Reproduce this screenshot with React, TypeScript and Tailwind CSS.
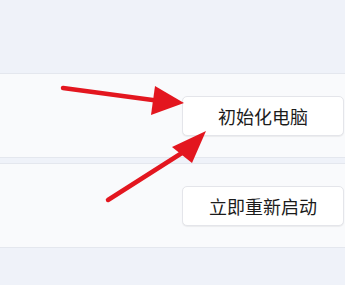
export default function App() {
  return (
    <div
      className="relative w-[345px] h-[285px] overflow-hidden bg-[#eff2f9]"
      style={{ fontFamily: '"Noto Sans CJK SC", "Noto Sans", sans-serif' }}
    >
      <div className="h-[73px]" />
      <div className="flex flex-col gap-[5px]">
        <Row label="初始化电脑" />
        <Row label="立即重新启动" />
      </div>
      <svg className="absolute inset-0 pointer-events-none" width="345" height="285" viewBox="0 0 345 285">
        <line x1="63" y1="88" x2="160" y2="101" stroke="#e3161f" strokeWidth="4.5" strokeLinecap="round" />
        <polygon points="155,86 184,103 151,115" fill="#e3161f" />
        <line x1="108" y1="200" x2="185" y2="151" stroke="#e3161f" strokeWidth="4.5" strokeLinecap="round" />
        <polygon points="206,131 172,147 192,163" fill="#e3161f" />
      </svg>
    </div>
  )
}

function Row({ label }: { label: string }) {
  return (
    <div className="h-[85px] bg-[#f9fafc] border-y border-[#e4e7ee] flex items-center justify-end pr-[1px]">
      <button className="w-[162px] h-[40px] rounded-[5px] bg-white border border-[#e4e5ea] shadow-[0_1px_1px_rgba(0,0,0,0.06)] text-[18px] text-[#1b1b1b] leading-none flex items-center justify-center pt-[1px]">
        {label}
      </button>
    </div>
  )
}
